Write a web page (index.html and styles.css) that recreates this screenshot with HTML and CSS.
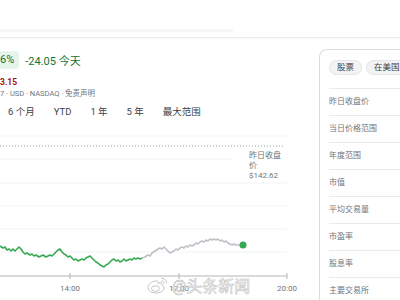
FILE: index.html
```html
<!DOCTYPE html>
<html lang="zh-CN">
<head>
  <meta charset="UTF-8">
  <title>股票行情</title>
  <link rel="stylesheet" href="styles.css">
</head>
<body>

  <header class="topbar">
    <div class="topbar-band"></div>
  </header>

  <main class="layout">
    <section class="quote">
      <div class="change-row">
        <span class="pct-chip">6%</span>
        <span class="delta">-24.05 今天</span>
      </div>
      <div class="after-hours">3.15</div>
      <div class="meta">7 · USD · NASDAQ · 免责声明</div>

      <nav class="ranges">
        <span>6 个月</span>
        <span>YTD</span>
        <span>1 年</span>
        <span>5 年</span>
        <span>最大范围</span>
      </nav>

      <div class="chart">
        <svg class="chart-svg" width="300" height="178" viewBox="0 122 300 178">
          <g class="grid">
            <line x1="0" y1="137" x2="287" y2="137"/>
            <line x1="0" y1="160" x2="233" y2="160"/>
            <line x1="0" y1="184" x2="287" y2="184"/>
            <line x1="0" y1="207" x2="287" y2="207"/>
            <line x1="0" y1="230" x2="287" y2="230"/>
            <line x1="0" y1="253" x2="287" y2="253"/>
          </g>
          <line class="prev-line" x1="0" y1="147" x2="285" y2="147"/>

          <polyline class="line-up" points="0,247 3,249 5,248 7,251 9,250 11,252 13,250 15,252 17,250 19,248 21,250 23,253 25,255 27,254 30,256 32,255 34,257 36,256 39,258 41,257 43,256 46,258 48,257 50,256 52,257 54,255 56,253 58,251 60,250 62,253 64,255 66,256 68,258 70,257 72,259 74,261 76,260 78,262 80,261 82,260 84,261 86,259 88,258 90,257 92,259 94,261 96,263 98,264 100,266 102,267 104,268 106,266 108,265 110,263 112,261 114,260 116,262 118,261 120,263 122,262 124,260 126,262 128,261 130,260 132,261 134,259 136,260 138,259 140,260 142,259"/>
          <polyline class="line-after" points="142,259 145,258 148,256 150,257 152,254 155,252 158,250 160,249 162,250 164,248 166,250 168,252 170,254 172,253 174,252 176,250 178,251 180,249 182,248 184,249 186,247 188,248 190,246 192,247 194,246 196,244 198,245 200,243 202,242 204,243 206,241 208,242 210,240 212,241 214,240 216,241 218,240 220,242 222,241 224,243 226,242 228,244 230,245 232,246 234,245 236,246 238,246 240,246 243,246"/>
          <circle class="dot" cx="243" cy="246" r="3.5"/>

          <line class="axis" x1="0" y1="277" x2="287" y2="277"/>
          <line class="axis" x1="70" y1="274" x2="70" y2="280"/>
          <line class="axis" x1="179" y1="274" x2="179" y2="280"/>
          <line class="axis" x1="287" y1="274" x2="287" y2="280"/>
          <text class="tick" x="70" y="292">14:00</text>
          <text class="tick" x="179" y="292">17:00</text>
          <text class="tick" x="287" y="292">20:00</text>
        </svg>

        <div class="prev-close">昨日收盘价<br>$142.62</div>

        <div class="watermark">
          <svg class="wm-logo" width="22" height="18" viewBox="0 0 22 18">
            <path d="M9 5c-4 0-8 3.4-8 6.6C1 15 5 17 9 17s8-2.3 8-5.2c0-1.6-1.3-2.3-2.4-2.6.8-1.4.6-3-1.5-2.5L11 7.4c.5-1.5-.2-2.5-2-2.4z"/>
            <ellipse cx="8.5" cy="12.5" rx="4" ry="2.8"/>
            <path d="M14 2.5c3-.6 6 1.6 5.6 5M14.5 5c1.5-.2 2.8.8 2.6 2.3"/>
          </svg>
          <span>@头条新闻</span>
        </div>
      </div>
    </section>

    <aside class="stats">
      <div class="tags">
        <span class="tag">股票</span>
        <span class="tag">在美国上市</span>
      </div>
      <ul class="stat-list">
        <li>昨日收盘价</li>
        <li>当日价格范围</li>
        <li>年度范围</li>
        <li>市值</li>
        <li>平均交易量</li>
        <li>市盈率</li>
        <li>股息率</li>
        <li>主要交易所</li>
      </ul>
    </aside>
  </main>

</body>
</html>
```

FILE: styles.css
```css
:root {
  --green: #137333;
  --green-bg: #e6f4ea;
  --line: #1e8e3e;
  --red: #a50e0e;
  --text: #3c4043;
  --muted: #70757a;
  --border: #dadce0;
  --grid: #f1f3f4;
}

html, body {
  overflow: hidden;
}

body {
  margin: 0;
  background: #fff;
  color: var(--text);
  font-family: Roboto, "Liberation Sans", "Noto Sans CJK SC", sans-serif;
}

.topbar {
  height: 38px;
  padding-top: 29px;
  box-sizing: border-box;
  border-bottom: 1px solid #ebebeb;
  box-shadow: 0 1px 2px rgba(0, 0, 0, 0.04);
}

.topbar-band {
  width: 233px;
  height: 3px;
  background: #f6f6f6;
}

.layout {
  display: flex;
  gap: 19px;
}

.quote {
  width: 300px;
  flex-shrink: 0;
}

.change-row {
  display: flex;
  align-items: center;
  gap: 6px;
  margin-top: 13px;
  height: 18px;
}

.pct-chip {
  background: var(--green-bg);
  color: var(--green);
  font-size: 11px;
  line-height: 18px;
  padding: 0 5px 0 0;
  border-radius: 0 4px 4px 0;
}

.delta {
  color: var(--green);
  font-size: 11px;
}

.after-hours {
  margin-top: 7px;
  font-size: 8.5px;
  line-height: 12px;
  font-weight: bold;
  color: var(--red);
}

.meta {
  font-size: 7.5px;
  line-height: 12px;
  color: var(--muted);
}

.ranges {
  display: flex;
  gap: 19px;
  margin-top: 5px;
  padding-left: 8px;
  font-size: 9.5px;
  line-height: 14px;
  color: var(--text);
}

.chart {
  position: relative;
  margin-top: 2px;
  height: 178px;
}

.chart-svg {
  display: block;
}

.grid line {
  stroke: var(--grid);
  stroke-width: 1;
}

.prev-line {
  stroke: #9aa0a6;
  stroke-width: 1;
  stroke-dasharray: 1 2;
}

.line-up,
.line-after {
  fill: none;
  stroke-width: 1.6;
  stroke-linejoin: round;
}

.line-up {
  stroke: #34a853;
}

.line-after {
  stroke: #bdc1c6;
}

.dot {
  fill: #34a853;
}

.axis {
  stroke: #b0b4b8;
  stroke-width: 1;
}

.tick {
  font-family: Roboto, "Liberation Sans", sans-serif;
  font-size: 8px;
  fill: var(--muted);
  text-anchor: middle;
}

.prev-close {
  position: absolute;
  left: 249px;
  top: 30px;
  width: 36px;
  font-size: 8px;
  line-height: 10px;
  color: var(--muted);
}

.watermark {
  position: absolute;
  left: 147px;
  top: 152px;
  display: flex;
  align-items: center;
  gap: 3px;
  font-size: 16px;
  color: rgba(255, 255, 255, 0.6);
  -webkit-text-stroke: 0.6px #c4c4c4;
}

.wm-logo path,
.wm-logo ellipse {
  fill: rgba(255, 255, 255, 0.5);
  stroke: #c4c4c4;
  stroke-width: 1;
}

.stats {
  flex-shrink: 0;
  width: 130px;
  margin-top: 11px;
  padding: 10px 0 0 9px;
  border: 1px solid var(--border);
  border-right: none;
  border-bottom: none;
  border-radius: 8px 0 0 0;
}

.tags {
  display: flex;
  gap: 4px;
  padding-bottom: 13px;
  border-bottom: 1px solid #e8eaed;
  white-space: nowrap;
}

.tag {
  font-size: 8.5px;
  line-height: 13px;
  padding: 0 7px;
  background: #f1f3f4;
  border: 1px solid #e3e5e8;
  border-radius: 8px;
  color: var(--text);
}

.stat-list {
  list-style: none;
  margin: 0;
  padding: 0;
}

.stat-list li {
  height: 26px;
  line-height: 26px;
  border-bottom: 1px solid #e8eaed;
  font-size: 8px;
  color: var(--muted);
}
```
